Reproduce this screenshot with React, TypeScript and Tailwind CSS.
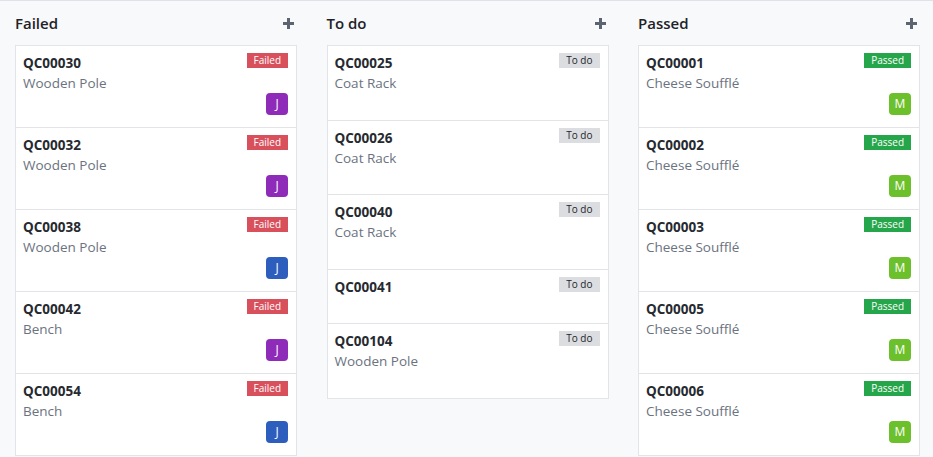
import React from 'react';

type Status = 'Failed' | 'To do' | 'Passed';

type Check = {
  ref: string;
  product?: string;
  user?: { initial: string; color: string };
};

const purple = 'bg-[#8e2bb8]';
const blue = 'bg-[#2d5dbd]';
const green = 'bg-[#6cc02b]';

const columns: { title: Status; records: Check[] }[] = [
  {
    title: 'Failed',
    records: [
      { ref: 'QC00030', product: 'Wooden Pole', user: { initial: 'J', color: purple } },
      { ref: 'QC00032', product: 'Wooden Pole', user: { initial: 'J', color: purple } },
      { ref: 'QC00038', product: 'Wooden Pole', user: { initial: 'J', color: blue } },
      { ref: 'QC00042', product: 'Bench', user: { initial: 'J', color: purple } },
      { ref: 'QC00054', product: 'Bench', user: { initial: 'J', color: blue } },
    ],
  },
  {
    title: 'To do',
    records: [
      { ref: 'QC00025', product: 'Coat Rack' },
      { ref: 'QC00026', product: 'Coat Rack' },
      { ref: 'QC00040', product: 'Coat Rack' },
      { ref: 'QC00041' },
      { ref: 'QC00104', product: 'Wooden Pole' },
    ],
  },
  {
    title: 'Passed',
    records: [
      { ref: 'QC00001', product: 'Cheese Soufflé', user: { initial: 'M', color: green } },
      { ref: 'QC00002', product: 'Cheese Soufflé', user: { initial: 'M', color: green } },
      { ref: 'QC00003', product: 'Cheese Soufflé', user: { initial: 'M', color: green } },
      { ref: 'QC00005', product: 'Cheese Soufflé', user: { initial: 'M', color: green } },
      { ref: 'QC00006', product: 'Cheese Soufflé', user: { initial: 'M', color: green } },
    ],
  },
];

function StatusBadge({ status }: { status: Status }) {
  if (status === 'Failed') {
    return (
      <span className="h-[15px] px-[7px] bg-[#d9505d] text-white text-[10px] leading-[15px]">
        Failed
      </span>
    );
  }
  if (status === 'Passed') {
    return (
      <span className="h-[15px] px-[7px] bg-[#26a64a] text-white text-[10px] leading-[15px]">
        Passed
      </span>
    );
  }
  return (
    <span className="h-[15px] px-[7px] bg-[#dcdde1] text-[#212529] text-[10px] leading-[15px]">
      To do
    </span>
  );
}

function PlusIcon() {
  return (
    <svg width="11" height="11" viewBox="0 0 11 11" className="text-[#5b6470]">
      <rect x="4" y="0" width="3" height="11" fill="currentColor" />
      <rect x="0" y="4" width="11" height="3" fill="currentColor" />
    </svg>
  );
}

function RecordCard({ record, status }: { record: Check; status: Status }) {
  return (
    <div className="shrink-0 -mt-px first:mt-0 bg-white border border-[#e2e4e8] pl-[7px] pr-2 pt-[7px] pb-2">
      <div className="flex items-start justify-between">
        <div className="flex flex-col">
          <span className="text-[13.5px] leading-5 font-bold text-[#262a30]">{record.ref}</span>
          {record.product && (
            <span className="text-[13.5px] leading-5 text-[#6b7280]">{record.product}</span>
          )}
        </div>
        <StatusBadge status={status} />
      </div>
      {record.user ? (
        <div className="flex justify-end h-[26px]">
          <div
            className={`w-[22px] h-[22px] rounded-[4px] ${record.user.color} text-white text-[12px] flex items-center justify-center`}
          >
            {record.user.initial}
          </div>
        </div>
      ) : (
        <div className="h-[18.5px]" />
      )}
    </div>
  );
}

export default function App() {
  return (
    <div
      className="h-screen overflow-hidden bg-[#f8f9fb] border-t border-[#dfe2e6] flex items-start gap-[29.5px] px-[15px]"
      style={{ fontFamily: '"Open Sans", "Noto Sans", sans-serif' }}
    >
      {columns.map((col) => (
        <div key={col.title} className="w-[282px] shrink-0 flex flex-col">
          <div className="shrink-0 h-[44px] flex items-center justify-between pr-[3px]">
            <span className="text-[15px] font-semibold text-[#1f2328]">{col.title}</span>
            <PlusIcon />
          </div>
          <div className="flex flex-col">
            {col.records.map((r) => (
              <RecordCard key={r.ref} record={r} status={col.title} />
            ))}
          </div>
        </div>
      ))}
    </div>
  );
}
